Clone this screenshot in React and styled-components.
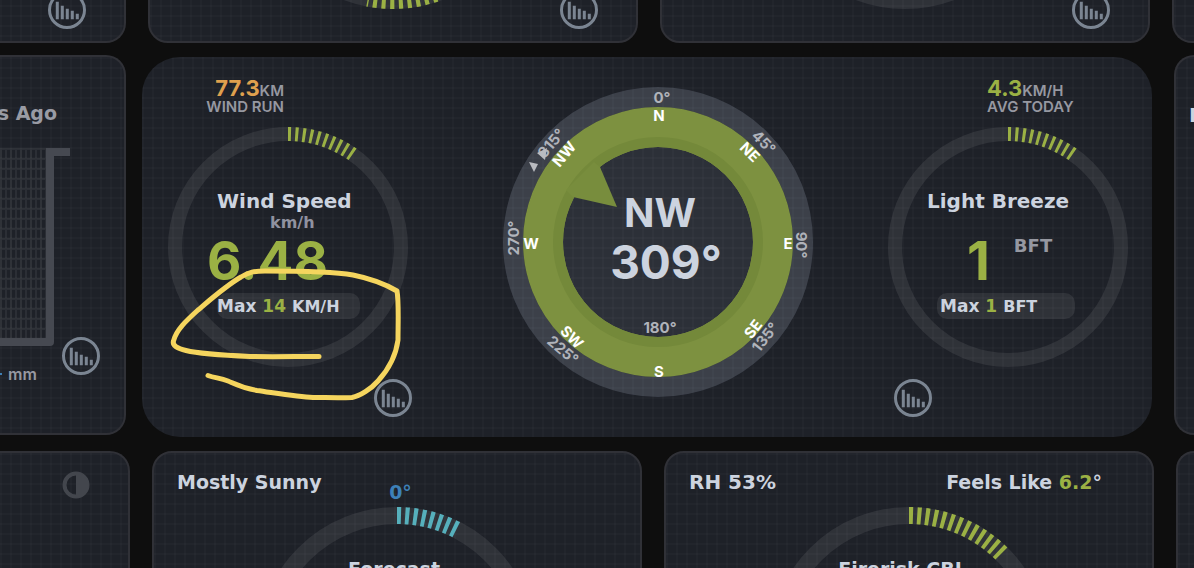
import React from 'react'
import styled, { createGlobalStyle } from 'styled-components'

const GlobalStyle = createGlobalStyle`
  * {
    box-sizing: border-box;
  }
  body {
    margin: 0;
    background: #0e0e0e;
    color: #ccd3df;
    font-family: 'DejaVu Sans', Verdana, sans-serif;
    font-weight: 700;
  }
`

const Page = styled.main`
  display: flex;
  flex-direction: column;
  height: 100vh;
  overflow: hidden;
`

const Row = styled.section`
  display: grid;
  grid-template-columns: ${(p) => p.$columns};
  column-gap: ${(p) => p.$gap || 22}px;
`

const TopRow = styled(Row)`
  flex: none;
  height: 43px;
  align-content: end;
  overflow: hidden;
`

const MiddleRow = styled(Row)`
  flex: none;
  align-items: start;
  margin-top: 12px;
`

const BottomRow = styled(Row)`
  flex: 1;
  min-height: 0;
  margin-top: 14px;
  align-items: start;
`

const corners = {
  left: 'border-left: 0; border-radius: 0 20px 20px 0;',
  right: 'border-right: 0; border-radius: 20px 0 0 20px;',
}

const Card = styled.article`
  min-width: 0;
  height: 380px;
  overflow: hidden;
  border: 2px solid #303137;
  border-radius: 20px;
  background-color: #1e2128;
  background-image: linear-gradient(
      to right,
      rgba(255, 255, 255, 0.02) 2px,
      transparent 2px
    ),
    linear-gradient(rgba(255, 255, 255, 0.02) 2px, transparent 2px);
  background-size: 10px 10px;
  ${(p) => corners[p.$edge]}
`

const WideCard = styled(Card)`
  position: relative;
  display: flex;
  justify-content: space-between;
  align-items: flex-start;
  margin-top: 2px;
  padding: 0 24px 0 26px;
  border: 0;
  border-radius: 38px;
`

const EdgeCard = styled(Card)`
  margin-left: 6px;
  padding: 46px 0 0 13px;
  font-size: 20px;
  line-height: 24px;
`

const IconButton = styled.button`
  display: block;
  flex: none;
  width: 38px;
  height: 38px;
  padding: 0;
  border: 0;
  background: none;
  color: #7b8592;
  cursor: pointer;
`

const ChartButton = ({ label, className }) => (
  <IconButton type="button" aria-label={label} className={className}>
    <svg width="38" height="38" viewBox="0 0 38 38">
      <circle cx="19" cy="19" r="17.5" fill="none" stroke="currentColor" strokeWidth="3" />
      <path
        d="M7.8 10.7h3v17.6h-3zM12.8 14.7h3v13.6h-3zM17.8 17.7h3v10.6h-3zM22.8 19.8h3v8.5h-3zM27.8 22.8h3v5.5h-3z"
        fill="currentColor"
      />
    </svg>
  </IconButton>
)

const point = (c, r, deg) => {
  const a = (deg * Math.PI) / 180
  return `${c + r * Math.sin(a)} ${c - r * Math.cos(a)}`
}

const GaugeSvg = styled.svg`
  display: block;
  grid-area: 1 / 1;
`

const Ring = ({ size, width, sweep, dash, color = '#9bb144' }) => {
  const c = size / 2
  const r = c - width / 2
  return (
    <GaugeSvg width={size} height={size} viewBox={`0 0 ${size} ${size}`} aria-hidden="true">
      <circle cx={c} cy={c} r={r} fill="none" stroke="#fff" strokeOpacity="0.08" strokeWidth={width} />
      {sweep && (
        <path
          d={`M${point(c, r, 0)}A${r} ${r} 0 ${sweep > 180 ? 1 : 0} 1 ${point(c, r, sweep)}`}
          fill="none"
          stroke={color}
          strokeWidth={width}
          strokeDasharray={dash}
        />
      )}
    </GaugeSvg>
  )
}

/* top row, only the lower edge of the cards is in view */

const StackCard = styled(Card)`
  display: grid;
  align-items: end;
  justify-items: center;
  padding-bottom: 12px;
`

const StackGauge = styled.div`
  grid-area: 1 / 1;
  margin-bottom: 20px;
`

const StackButton = styled(ChartButton)`
  grid-area: 1 / 1;
  justify-self: end;
  margin-right: 38px;
`

/* wind card */

const Side = styled.div`
  flex: none;
  width: 240px;
`

const Summary = styled.div`
  height: 70px;
  padding-top: 20px;
  font-family: Inter, sans-serif;
  font-size: 15px;
  font-weight: 600;
  color: #9698a1;
  ${(p) => (p.$right ? 'padding-left: 99px;' : 'width: 116px; text-align: right;')}
`

const SummaryValue = styled.p`
  height: 22px;
  margin: 0;
  line-height: 22px;
  white-space: nowrap;
`

const SummaryLabel = styled(SummaryValue)`
  line-height: 16px;
`

const Accent = styled.strong`
  color: ${(p) => p.$color || '#9bb144'};
  font-size: ${(p) => (p.$size ? `${p.$size}px` : 'inherit')};
  font-weight: 700;
`

const Gauge = styled.div`
  display: grid;
  height: 240px;
`

const Reading = styled.div`
  grid-area: 1 / 1;
  display: flex;
  flex-direction: column;
  align-items: flex-start;
  padding-top: 62px;
  padding-left: ${(p) => p.$inset}px;
`

const Name = styled.h2`
  margin: 0;
  padding-left: 10px;
  font-size: 20px;
  line-height: 24px;
  white-space: nowrap;
`

const UnitLine = styled.div`
  height: 20px;
  padding-left: 63px;
  font-size: 16px;
  line-height: 20px;
  color: #9092a0;
`

const ValueLine = styled.div`
  display: flex;
  gap: 24px;
  height: 56px;
  padding-left: ${(p) => p.$indent || 0}px;
  font-family: Inter, sans-serif;
  font-size: 53px;
  line-height: 56px;
  color: #9bb144;
`

const ValueUnit = styled.span`
  font-family: 'DejaVu Sans', Verdana, sans-serif;
  font-size: 18px;
  line-height: 26px;
  color: #9698a1;
`

const Pill = styled.div`
  display: flex;
  align-items: baseline;
  gap: 6px;
  width: ${(p) => (p.$narrow ? 138 : 143)}px;
  height: 26px;
  margin-top: 4px;
  margin-left: ${(p) => (p.$narrow ? 20 : 10)}px;
  padding-left: ${(p) => (p.$narrow ? 3 : 0)}px;
  border-radius: 10px;
  background: rgba(255, 255, 255, 0.08);
  font-size: 17px;
  line-height: 26px;
`

const PillUnit = styled.span`
  font-size: 16px;
`

const SideButton = styled(ChartButton)`
  margin-top: 12px;
  margin-left: 6px;
`

const SideEndButton = styled(SideButton)`
  margin-left: 206px;
`

const CompassBox = styled.div`
  display: grid;
  flex: none;
  width: 310px;
  margin-top: 30px;
  margin-left: 20px;
`

const CompassSvg = styled.svg`
  display: block;
  grid-area: 1 / 1;

  text {
    font-family: Inter, sans-serif;
    font-size: 15px;
    font-weight: 700;
    text-anchor: middle;
    dominant-baseline: central;
  }
`

const Bearing = styled.div`
  grid-area: 1 / 1;
  padding-top: 101px;
  padding-left: 4px;
  font-family: Inter, sans-serif;
  text-align: center;
`

const Direction = styled.div`
  font-size: 40px;
  line-height: 50px;
`

const Degrees = styled.div`
  padding-left: 12px;
  font-size: 46px;
  line-height: 48px;
`

const letters = [
  ['N', 156, 28, 0],
  ['NE', 247, 65, 45],
  ['E', 285, 156, 0],
  ['SE', 250, 242, -52],
  ['S', 156, 284, 0],
  ['SW', 69, 250, 45],
  ['W', 28, 156, 0],
  ['NW', 61, 67, -50],
]

const degrees = [
  ['0°', 159, 10, 0],
  ['45°', 261, 55, 45],
  ['90°', 298, 158, 90],
  ['135°', 262, 250, -52],
  ['180°', 157, 240, 0],
  ['225°', 60, 263, 40],
  ['270°', 10, 151, -90],
  ['315°', 48, 56, -50],
]

const Compass = () => (
  <CompassBox>
    <CompassSvg width="310" height="310" viewBox="0 0 310 310">
      <circle cx="155" cy="155" r="155" fill="#dfe6ff" fillOpacity="0.08" />
      <circle cx="155" cy="155" r="145" fill="none" stroke="#dfe6ff" strokeOpacity="0.09" strokeWidth="20" />
      <circle cx="155" cy="155" r="115" fill="none" stroke="#7d9140" strokeWidth="40" />
      <circle cx="155" cy="155" r="100" fill="none" stroke="#74893a" strokeWidth="10" />
      <path d="M97 80L114 120L70 110L63 103L91 75Z" fill="#788d3d" />
      {degrees.map(([text, x, y, turn]) => (
        <text key={text} x={x} y={y} fill="#b0b3ba" transform={`rotate(${turn} ${x} ${y})`}>
          {text}
        </text>
      ))}
      <path d="M26 75l9 2-4 8zM34 66l10-5-2 12z" fill="#b9bbc0" />
      {letters.map(([text, x, y, turn]) => (
        <text key={text} x={x} y={y} fill="#fff" transform={`rotate(${turn} ${x} ${y})`}>
          {text}
        </text>
      ))}
    </CompassSvg>
    <Bearing>
      <Direction>NW</Direction>
      <Degrees>309°</Degrees>
    </Bearing>
  </CompassBox>
)

// hand drawn circle round the max wind speed
const Marker = styled.svg`
  position: absolute;
  top: 203px;
  left: 22px;
  pointer-events: none;
`

const MarkerStroke = () => (
  <Marker width="240" height="146" viewBox="164 260 240 146" aria-hidden="true">
    <path
      d="M319 356.5C296 356.5 270 357 250 356.5C228 355.5 200 354 186 350.5C178 348.5 172 346 173.5 341C176 330 187 320 198 310C211 299 227 285 241 277C249 272 254 271 265 271C293 271 330 271 353 275C373 279 385 284 397 291C399 302 398 324 398 340C396 355 389 369 378 381C371 389 360 396 352 397.5C338 398 325 397.5 313 397.5C298 397 275 393 257 390.5C242 388 235 384 228 381C220 378 215 378 208 375.5"
      fill="none"
      stroke="#f5d55e"
      strokeWidth="5"
      strokeLinecap="round"
      strokeLinejoin="round"
    />
  </Marker>
)

/* rain card */

const RainCard = styled(Card)`
  display: flex;
  flex-direction: column;
`

const RainTitle = styled.h2`
  display: flex;
  justify-content: flex-end;
  width: 57px;
  margin: 0;
  padding-top: 44px;
  font-size: 19px;
  line-height: 24px;
  white-space: nowrap;
  color: #999ba4;
`

const RainTank = styled.div`
  display: flex;
  align-items: flex-end;
  gap: 8px;
  margin-top: 23px;

  svg {
    display: block;
    overflow: visible;
  }
`

const TankButton = styled(ChartButton)`
  margin-bottom: -29px;
`

const RainUnit = styled.p`
  display: flex;
  align-items: center;
  gap: 6px;
  margin: 18px 0 0;
  font-family: Inter, sans-serif;
  font-size: 16px;
  font-weight: 600;
  line-height: 20px;
  color: #9698a1;
`

const Dash = styled.span`
  width: 2px;
  height: 2px;
  background: #3f7fb5;
`

/* bottom row */

const MoonCard = styled(Card)`
  padding: 18px 0 0 62px;
`

const InfoCard = styled(Card)`
  display: grid;
  grid-template-rows: 54px 280px;
  justify-items: center;
`

const InfoHead = styled.header`
  display: grid;
  grid-template-columns: 1fr auto 1fr;
  justify-self: stretch;
  padding: 17px 50px 0 23px;
  font-size: 19px;
  line-height: 24px;
  white-space: nowrap;
`

const InfoPeak = styled.span`
  padding-top: 10px;
  padding-left: 34px;
  color: #3d80b8;
`

const InfoRight = styled.span`
  grid-column: 3;
  justify-self: end;
`

const InfoGauge = styled.div`
  display: grid;
  justify-items: center;
`

const InfoName = styled.h2`
  grid-area: 1 / 1;
  margin: 0;
  padding-top: 50px;
  padding-right: ${(p) => p.$shift}px;
  font-size: 19px;
  line-height: 24px;
`

const Humidity = styled.span`
  font-size: 20px;
`

const App = () => (
  <>
    <GlobalStyle />
    <Page>
      <TopRow $columns="126px minmax(0, 1fr) minmax(0, 1fr) 22px">
        <StackCard $edge="left">
          <StackButton label="Chart" />
        </StackCard>
        <StackCard>
          <StackGauge>
            <Ring size={280} width={17} sweep={191} dash="4 4.4" />
          </StackGauge>
          <StackButton label="Chart" />
        </StackCard>
        <StackCard>
          <StackGauge>
            <Ring size={280} width={17} />
          </StackGauge>
          <StackButton label="Chart" />
        </StackCard>
        <StackCard $edge="right" />
      </TopRow>

      <MiddleRow $columns="126px minmax(0, 1fr) 26px" $gap={16}>
        <RainCard $edge="left">
          <RainTitle>s Ago</RainTitle>
          <RainTank>
            <svg width="54" height="198" viewBox="0 0 54 198" aria-hidden="true">
              <defs>
                <pattern id="mesh" width="5" height="10" patternUnits="userSpaceOnUse">
                  <path d="M0 0h5v2H0zM0 0h2v10H0z" fill="#fff" fillOpacity="0.06" />
                </pattern>
              </defs>
              <rect width="46" height="190" fill="url(#mesh)" />
              <path d="M0 190H46V0H70V8H54V194Q54 198 50 198H0Z" fill="#464951" />
            </svg>
            <TankButton label="Rain chart" />
          </RainTank>
          <RainUnit>
            <Dash />
            mm
          </RainUnit>
        </RainCard>

        <WideCard>
          <Side>
            <Summary>
              <SummaryValue>
                <Accent $color="#dfa04e" $size={22}>77.3</Accent>KM
              </SummaryValue>
              <SummaryLabel>WIND RUN</SummaryLabel>
            </Summary>
            <Gauge>
              <Ring size={240} width={14} sweep={35} dash="3 4.3" />
              <Reading $inset={39}>
                <Name>Wind Speed</Name>
                <UnitLine>km/h</UnitLine>
                <ValueLine>6.48</ValueLine>
                <Pill>
                  Max <Accent>14</Accent>
                  <PillUnit>KM/H</PillUnit>
                </Pill>
              </Reading>
            </Gauge>
            <SideEndButton label="Wind speed chart" />
          </Side>

          <Compass />

          <Side>
            <Summary $right>
              <SummaryValue>
                <Accent $size={22}>4.3</Accent>KM/H
              </SummaryValue>
              <SummaryLabel>AVG TODAY</SummaryLabel>
            </Summary>
            <Gauge>
              <Ring size={240} width={14} sweep={35} dash="3 4.3" />
              <Reading $inset={29}>
                <Name>Light Breeze</Name>
                <UnitLine />
                <ValueLine $indent={50}>
                  1<ValueUnit>BFT</ValueUnit>
                </ValueLine>
                <Pill $narrow>
                  Max <Accent>1</Accent>
                  <PillUnit>BFT</PillUnit>
                </Pill>
              </Reading>
            </Gauge>
            <SideButton label="Beaufort chart" />
          </Side>
          <MarkerStroke />
        </WideCard>

        <EdgeCard $edge="right">H</EdgeCard>
      </MiddleRow>

      <BottomRow $columns="130px minmax(0, 1fr) minmax(0, 1fr) 18px">
        <MoonCard $edge="left">
          <svg width="28" height="28" viewBox="0 0 28 28" aria-hidden="true">
            <circle cx="14" cy="14" r="11.5" fill="none" stroke="#43464d" strokeWidth="4" />
            <path d="M14 1a13 13 0 0 1 0 26z" fill="#43464d" />
          </svg>
        </MoonCard>
        <InfoCard>
          <InfoHead>
            <span>Mostly Sunny</span>
            <InfoPeak>0°</InfoPeak>
          </InfoHead>
          <InfoGauge>
            <Ring size={280} width={17} sweep={28} dash="4 4.2" color="#56b0bc" />
            <InfoName $shift={6}>Forecast</InfoName>
          </InfoGauge>
        </InfoCard>
        <InfoCard>
          <InfoHead>
            <Humidity>RH 53%</Humidity>
            <InfoRight>
              Feels Like <Accent>6.2</Accent>°
            </InfoRight>
          </InfoHead>
          <InfoGauge>
            <Ring size={280} width={17} sweep={45} dash="4 4.2" />
            <InfoName $shift={18}>Firerisk CBI</InfoName>
          </InfoGauge>
        </InfoCard>
        <Card $edge="right" />
      </BottomRow>
    </Page>
  </>
)

export default App
